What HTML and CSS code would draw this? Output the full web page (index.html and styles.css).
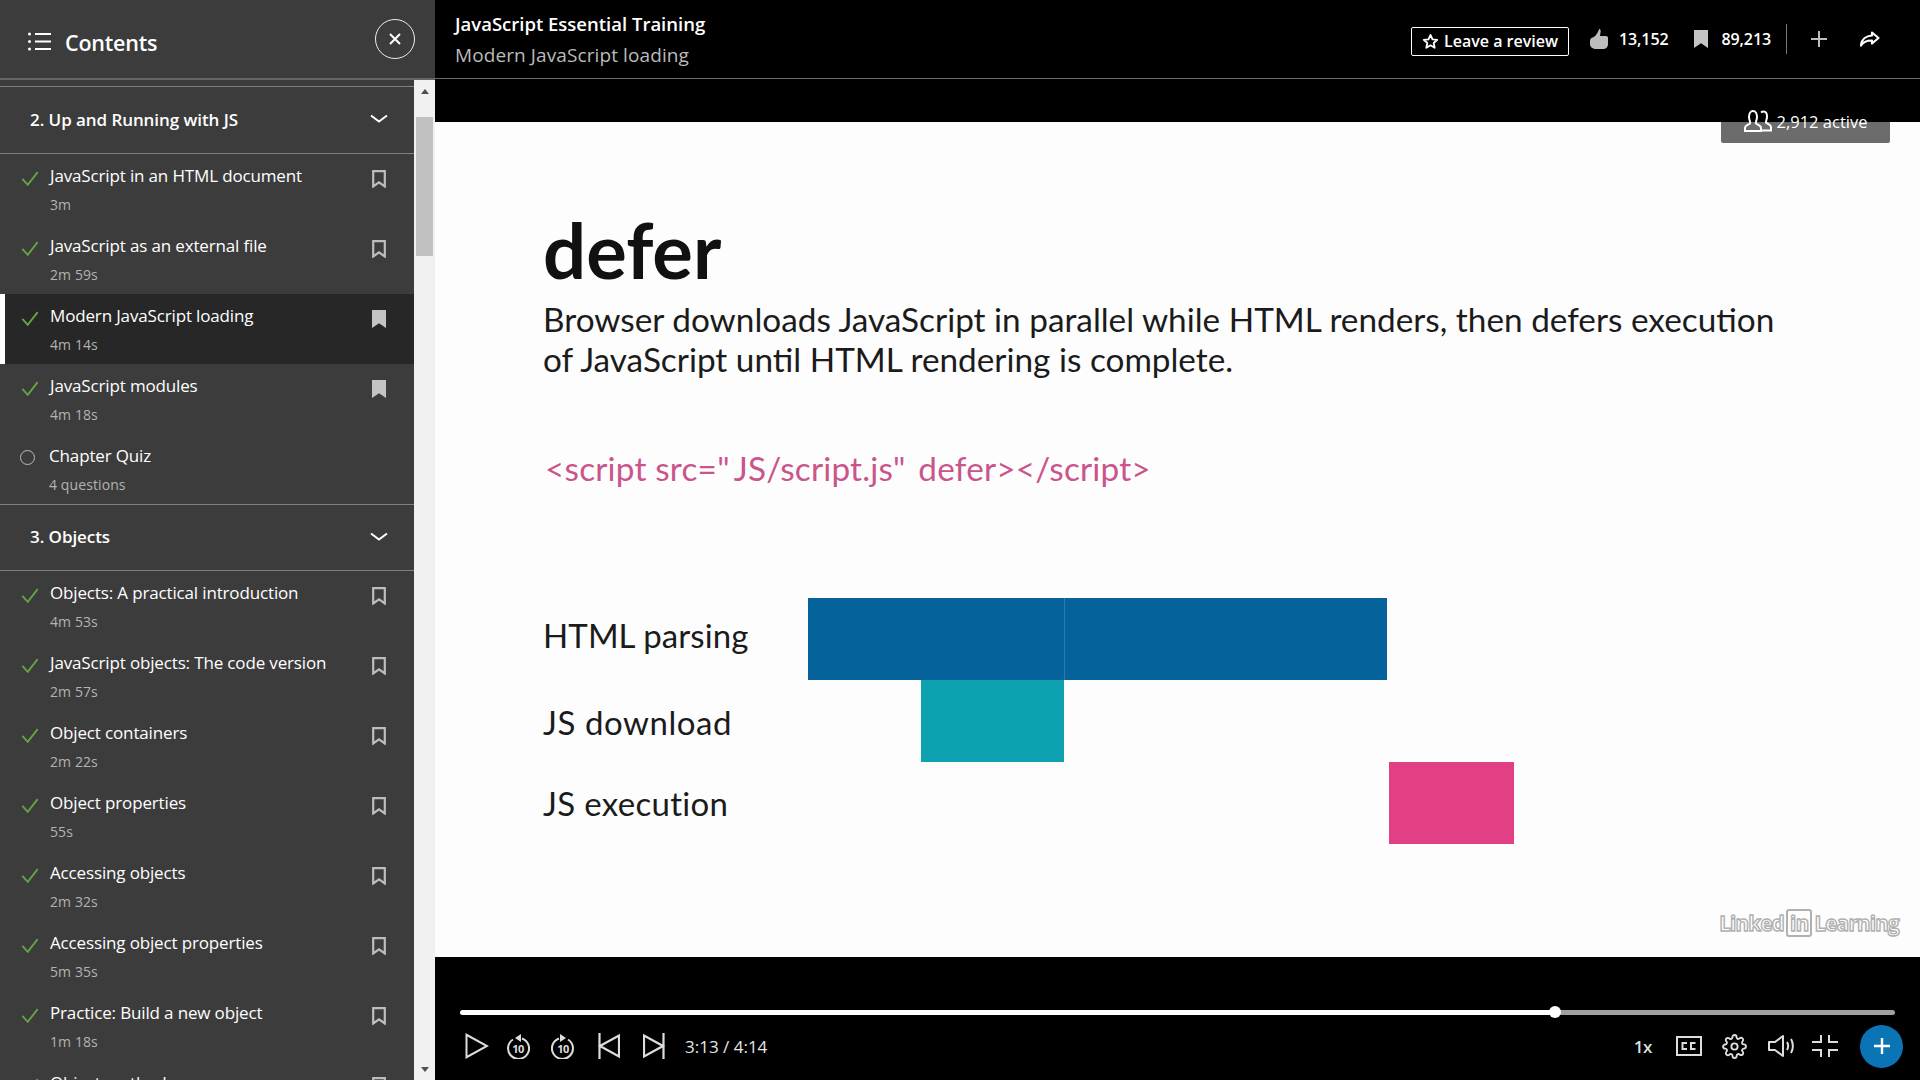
FILE: index.html
```html
<!DOCTYPE html>
<html lang="en">
<head>
<meta charset="utf-8">
<title>Modern JavaScript loading</title>
<link rel="stylesheet" href="styles.css">
</head>
<body>
<svg class="defs" width="0" height="0" aria-hidden="true">
  <symbol id="check" viewBox="0 0 20 16"><path d="M1.5 8.5 7.5 15 18.500 1" fill="none" stroke="#63a546" stroke-width="2.100"/></symbol>
  <symbol id="mark" viewBox="0 0 14 18"><path d="M1.2 1.2h11.6v15.3L7 12.4l-5.8 4.1z" fill="none" stroke="#bdbdbd" stroke-width="2.200"/></symbol>
  <symbol id="markfill" viewBox="0 0 14 18"><path d="M0 0h14v18l-7-4.8L0 18z" fill="#c4c4c4"/></symbol>
  <symbol id="chev" viewBox="0 0 18 10"><path d="M1 1.5 9 7.5l8-6" fill="none" stroke="#fff" stroke-width="2"/></symbol>
</svg>

<aside class="sidebar">
  <header class="side-head">
    <svg class="list-icon" width="23" height="19" viewBox="0 0 23 19"><g fill="#fff"><circle cx="1.5" cy="2" r="1.5"/><circle cx="1.5" cy="9.5" r="1.5"/><circle cx="1.5" cy="17" r="1.5"/><rect x="7" y="1" width="16" height="2"/><rect x="7" y="8.500" width="16" height="2"/><rect x="7" y="16" width="16" height="2"/></g></svg>
    <h2 class="side-title">Contents</h2>
    <button class="close-btn"><svg width="14" height="14" viewBox="0 0 14 14"><path d="M2 2l10 10M12 2 2 12" stroke="#fff" stroke-width="2"/></svg></button>
  </header>
  <div class="side-body">
    <div class="toc">
      <div class="sec"><span>2. Up and Running with JS</span><svg class="chev"><use href="#chev"/></svg></div>
      <div class="item"><svg class="check"><use href="#check"/></svg><div class="txt"><p class="t">JavaScript in an HTML document</p><p class="d">3m</p></div><svg class="mark"><use href="#mark"/></svg></div>
      <div class="item"><svg class="check"><use href="#check"/></svg><div class="txt"><p class="t">JavaScript as an external file</p><p class="d">2m 59s</p></div><svg class="mark"><use href="#mark"/></svg></div>
      <div class="item active"><svg class="check"><use href="#check"/></svg><div class="txt"><p class="t">Modern JavaScript loading</p><p class="d">4m 14s</p></div><svg class="mark"><use href="#markfill"/></svg></div>
      <div class="item"><svg class="check"><use href="#check"/></svg><div class="txt"><p class="t">JavaScript modules</p><p class="d">4m 18s</p></div><svg class="mark"><use href="#markfill"/></svg></div>
      <div class="item"><span class="ring"></span><div class="txt"><p class="t">Chapter Quiz</p><p class="d">4 questions</p></div></div>
      <div class="sec sec-next"><span>3. Objects</span><svg class="chev"><use href="#chev"/></svg></div>
      <div class="item"><svg class="check"><use href="#check"/></svg><div class="txt"><p class="t">Objects: A practical introduction</p><p class="d">4m 53s</p></div><svg class="mark"><use href="#mark"/></svg></div>
      <div class="item"><svg class="check"><use href="#check"/></svg><div class="txt"><p class="t">JavaScript objects: The code version</p><p class="d">2m 57s</p></div><svg class="mark"><use href="#mark"/></svg></div>
      <div class="item"><svg class="check"><use href="#check"/></svg><div class="txt"><p class="t">Object containers</p><p class="d">2m 22s</p></div><svg class="mark"><use href="#mark"/></svg></div>
      <div class="item"><svg class="check"><use href="#check"/></svg><div class="txt"><p class="t">Object properties</p><p class="d">55s</p></div><svg class="mark"><use href="#mark"/></svg></div>
      <div class="item"><svg class="check"><use href="#check"/></svg><div class="txt"><p class="t">Accessing objects</p><p class="d">2m 32s</p></div><svg class="mark"><use href="#mark"/></svg></div>
      <div class="item"><svg class="check"><use href="#check"/></svg><div class="txt"><p class="t">Accessing object properties</p><p class="d">5m 35s</p></div><svg class="mark"><use href="#mark"/></svg></div>
      <div class="item"><svg class="check"><use href="#check"/></svg><div class="txt"><p class="t">Practice: Build a new object</p><p class="d">1m 18s</p></div><svg class="mark"><use href="#mark"/></svg></div>
      <div class="item"><svg class="check"><use href="#check"/></svg><div class="txt"><p class="t">Object methods</p><p class="d">3m 21s</p></div><svg class="mark"><use href="#mark"/></svg></div>
    </div>
    <div class="scrollbar">
      <span class="arrow-up"></span>
      <span class="thumb"></span>
      <span class="arrow-down"></span>
    </div>
  </div>
</aside>

<main class="main">
  <header class="top">
    <div class="course">
      <h1 class="course-title">JavaScript Essential Training</h1>
      <p class="course-sub">Modern JavaScript loading</p>
    </div>
    <div class="top-actions">
      <button class="review"><svg width="17" height="17" viewBox="0 0 24 24"><path d="M12 2.800l2.800 6.200 6.700.7-5 4.500 1.400 6.600-5.900-3.400-5.900 3.400 1.400-6.600-5-4.500 6.700-.7z" fill="none" stroke="#fff" stroke-width="2.600" stroke-linejoin="round"/></svg>Leave a review</button>
      <svg class="thumb-up" width="18" height="20" viewBox="0 0 18 20"><path d="M9 0c1.500 0 2 1.500 1.500 3.500L10 7h6c1.500 0 2 1 2 2v6c0 3-2 5-5 5H6c-4 0-6-2.500-6-5v-3c0-2 1-3 2.500-3.500C5 8 8 4 9 0z" fill="#bdbdbd"/></svg>
      <span class="count">13,152</span>
      <svg class="top-mark" width="14" height="18"><use href="#markfill"/></svg>
      <span class="count">89,213</span>
      <span class="vr"></span>
      <svg class="top-plus" width="16" height="16" viewBox="0 0 16 16"><path d="M8 0v16M0 8h16" stroke="#bdbdbd" stroke-width="2"/></svg>
      <svg class="share" width="20" height="16" viewBox="0 0 20 16"><path d="M12 1.500 18.500 7 12 12.500V9.500C7 9.300 3.500 10.500 1 14.500 1.500 8.500 6 4.800 12 4.500z" fill="none" stroke="#fff" stroke-width="2.200" stroke-linejoin="round"/></svg>
    </div>
  </header>
  <div class="band"></div>
  <section class="slide">
    <div class="active-badge">
      <svg width="28" height="22" viewBox="0 0 28 22"><g fill="none" stroke="#fff" stroke-width="2"><path d="M1 21v-3c0-2.500 3-3 5-4.500 1-1-1-3-1-6.500 0-3 1.500-6 4-6s4 3 4 6c0 3.500-2 5.500-1 6.500 2 1.500 5 2 5 4.500v3z"/><path d="M17 2.500c.8-.6 1.500-.9 2.500-.9 2.500 0 3.500 2.500 3.500 5 0 3-1.500 5-1 6 1.500 1.400 5 1.800 5 4.400v3.500h-9"/></g></svg>
      <span>2,912 active</span>
    </div>
    <h2 class="s-title">defer</h2>
    <p class="s-body">Browser downloads JavaScript in parallel while HTML renders, then defers execution<br>of JavaScript until HTML rendering is complete.</p>
    <p class="s-code">&lt;script src=<span class="q">"</span>JS/script.js<span class="q">"</span> defer&gt;&lt;/script&gt;</p>
    <div class="chart">
      <div class="row"><span class="lab lab-up">HTML parsing</span><span class="bar blue"><i class="seam"></i></span></div>
      <div class="row"><span class="lab lab-down">JS download</span><span class="bar teal"></span></div>
      <div class="row"><span class="lab lab-exec">JS execution</span><span class="bar pink"></span></div>
    </div>
    <div class="brand"><span>Linked</span><span class="in">in</span><span>Learning</span></div>
  </section>
  <footer class="player">
    <div class="progress"><span class="played"></span><span class="knob"></span><span class="rest"></span></div>
    <div class="ctrls">
      <svg class="c-play" width="24" height="26" viewBox="0 0 24 26"><path d="M1.500 1.800v22.400L22 13z" fill="none" stroke="#ddd" stroke-width="2"/></svg>
      <span class="skip back"><svg width="24" height="26" viewBox="0 0 24 26"><path d="M7 6.500A10.500 10.500 0 1 0 16 5.500" fill="none" stroke="#ddd" stroke-width="2"/><path d="M15 1 9 5l6 4z" fill="#ddd"/></svg><b>10</b></span>
      <span class="skip fwd"><svg width="24" height="26" viewBox="0 0 24 26"><path d="M17 6.500A10.500 10.500 0 1 1 8 5.500" fill="none" stroke="#ddd" stroke-width="2"/><path d="M9 1l6 4-6 4z" fill="#ddd"/></svg><b>10</b></span>
      <svg class="c-prev" width="22" height="26" viewBox="0 0 22 26"><path d="M1.500 0v26M21 2.500v21L2 13z" fill="none" stroke="#ddd" stroke-width="2.200"/></svg>
      <svg class="c-next" width="22" height="26" viewBox="0 0 22 26"><path d="M20.500 0v26M1 2.500v21L20 13z" fill="none" stroke="#ddd" stroke-width="2.200"/></svg>
      <span class="time">3:13 / 4:14</span>
      <span class="rate">1x</span>
      <svg class="c-cc" width="26" height="20" viewBox="0 0 26 20"><rect x="1" y="1" width="24" height="18" fill="none" stroke="#ddd" stroke-width="2"/><path d="M11 7H6.500v6H11M19.500 7H15v6h4.500" fill="none" stroke="#ddd" stroke-width="2"/></svg>
      <svg class="c-gear" width="25" height="25" viewBox="0 0 24 24" fill="none" stroke="#ddd" stroke-width="1.800"><circle cx="12" cy="12" r="3"/><path d="M19.400 15a1.650 1.650 0 0 0 .33 1.820l.06.06a2 2 0 0 1 0 2.830 2 2 0 0 1-2.830 0l-.06-.06a1.650 1.650 0 0 0-1.820-.33 1.650 1.650 0 0 0-1 1.510V21a2 2 0 0 1-2 2 2 2 0 0 1-2-2v-.09A1.650 1.650 0 0 0 9 19.400a1.650 1.650 0 0 0-1.820.33l-.06.06a2 2 0 0 1-2.830 0 2 2 0 0 1 0-2.830l.06-.06a1.650 1.650 0 0 0 .33-1.820 1.650 1.650 0 0 0-1.510-1H3a2 2 0 0 1-2-2 2 2 0 0 1 2-2h.09A1.650 1.650 0 0 0 4.600 9a1.650 1.650 0 0 0-.33-1.820l-.06-.06a2 2 0 0 1 0-2.830 2 2 0 0 1 2.830 0l.06.06a1.650 1.650 0 0 0 1.820.33H9a1.650 1.650 0 0 0 1-1.510V3a2 2 0 0 1 2-2 2 2 0 0 1 2 2v.09a1.650 1.650 0 0 0 1 1.510 1.650 1.650 0 0 0 1.820-.33l.06-.06a2 2 0 0 1 2.830 0 2 2 0 0 1 0 2.830l-.06.06a1.650 1.650 0 0 0-.33 1.820V9a1.650 1.650 0 0 0 1.510 1H21a2 2 0 0 1 2 2 2 2 0 0 1-2 2h-.09a1.650 1.650 0 0 0-1.510 1z"/></svg>
      <svg class="c-vol" width="27" height="22" viewBox="0 0 27 22"><path d="M1 7v8h6l8 6V1L7 7z" fill="none" stroke="#ddd" stroke-width="2" stroke-linejoin="round"/><path d="M19 7c1.500 2.500 1.500 5.500 0 8M23 4c2.500 4 2.500 10 0 14" fill="none" stroke="#ddd" stroke-width="2"/></svg>
      <svg class="c-full" width="26" height="22" viewBox="0 0 26 22"><path d="M0 7h9V0M17 0v7h9M0 15h9v7M17 22v-7h9" fill="none" stroke="#ddd" stroke-width="2"/></svg>
      <button class="add"><svg width="16" height="16" viewBox="0 0 16 16"><path d="M8 0v16M0 8h16" stroke="#fff" stroke-width="2.400"/></svg></button>
    </div>
  </footer>
</main>
</body>
</html>
```
FILE: styles.css
```css
* { box-sizing: border-box; }
html, body { height: 100%; }
body {
  margin: 0;
  height: 1080px;
  display: flex;
  overflow: hidden;
  background: #000;
  color: #fff;
  font-family: "Open Sans", "Noto Sans", sans-serif;
}
p, h1, h2 { margin: 0; font-weight: normal; }
button { padding: 0; font: inherit; color: inherit; background: none; }
.defs { position: absolute; }

.sidebar { width: 435px; flex: none; display: flex; flex-direction: column; background: #3c3c3c; height: 1080px; }
.side-head { height: 80px; flex: none; display: flex; align-items: center; padding: 4px 20px 0 28px; border-bottom: 2px solid #666; }
.list-icon { margin-right: 14px; }
.side-title { font-size: 21.500px; font-weight: 600; letter-spacing: -0.2px; flex: 1; padding-top: 2px; }
.close-btn { width: 40px; height: 40px; border: 1.500px solid #eee; border-radius: 50%; display: flex; align-items: center; justify-content: center; margin-top: -4px; }
.side-body { flex: 1; min-height: 0; display: flex; }
.toc { flex: 1; min-width: 0; overflow: hidden; padding-top: 6px; }
.sec { height: 68px; display: flex; align-items: center; justify-content: space-between; padding: 0 26px 2px 30px; border-top: 1px solid #808080; border-bottom: 1px solid #808080; font-size: 17px; font-weight: 600; letter-spacing: -0.07px; }
.sec-next { height: 67px; }
.chev { width: 18px; height: 10px; }
.item { height: 70px; display: flex; align-items: flex-start; padding: 0 28px 0 21px; }
.item .check { width: 18px; height: 15px; margin-top: 17px; flex: none; }
.ring { width: 15px; height: 15px; border: 1.300px solid #bbb; border-radius: 50%; margin: 16px 3px 0 -1px; flex: none; }
.txt { flex: 1; padding-left: 11px; padding-top: 9px; }
.t { font-size: 17px; line-height: 26px; letter-spacing: -0.15px; }
.d { font-size: 14px; line-height: 20px; margin-top: 6px; color: #b3b3b3; letter-spacing: 0.1px; }
.mark { width: 14px; height: 18px; margin-top: 16px; flex: none; }
.active { background: #272727; box-shadow: inset 5px 0 0 #fff; }
.scrollbar { width: 21px; flex: none; background: #f1f1f1; display: flex; flex-direction: column; align-items: center; }
.arrow-up { margin-top: 9px; border: 4.500px solid transparent; border-top: 0; border-bottom: 5px solid #505050; }
.thumb { width: 17px; height: 139px; margin-top: 23px; background: #c1c1c1; }
.arrow-down { margin-top: auto; margin-bottom: 8px; border: 4.500px solid transparent; border-bottom: 0; border-top: 5px solid #505050; }

.main { flex: 1; min-width: 0; display: flex; flex-direction: column; }
.top { height: 79px; flex: none; display: flex; align-items: center; justify-content: space-between; padding: 0 40px 0 20px; border-bottom: 1px solid #6a6a6a; }
.course { padding-top: 1px; }
.course-title { font-size: 18.500px; font-weight: 600; line-height: 30px; }
.course-sub { font-size: 19px; line-height: 31px; margin-top: 1px; color: #bbb; letter-spacing: 0.1px; }
.top-actions { display: flex; align-items: center; margin-top: -1px; }
.review { width: 158px; height: 29px; border: 1px solid #fff; border-radius: 2px; display: flex; align-items: center; justify-content: center; gap: 5px; font-size: 16px; font-weight: 600; color: #fff; margin-right: 21px; margin-left: 1px; margin-top: 5px; }
.thumb-up { margin-right: 11px; }
.count { font-size: 16px; font-weight: 600; letter-spacing: -0.1px; }
.top-mark { margin: 0 14px 0 25px; }
.vr { width: 1px; height: 30px; background: #777; margin: 0 24px 0 15px; }
.share { margin-left: 33px; }
.band { height: 43px; flex: none; background: #000; }

.slide { flex: 1; min-height: 0; position: relative; background: #fdfdfd; color: #1b1b1b; font-family: Lato, "Open Sans", sans-serif; padding: 0 0 0 108px; }
.active-badge { position: absolute; right: 30px; top: -21px; width: 169px; height: 42px; padding-bottom: 2px; border-radius: 0 0 2px 2px; display: flex; align-items: center; justify-content: center; gap: 5px; color: #fff; font: 16.500px "Open Sans", sans-serif; background: linear-gradient(#000 21px, #6c6c6c 21px); }
.s-title { font-size: 76px; line-height: 80px; font-weight: 700; margin: 88px 0 0 0; color: #111; }
.s-body { font-size: 33.330px; line-height: 40px; margin-top: 9px; }
.s-code { font-size: 33.300px; line-height: 40px; margin-top: 69px; color: #c9558c; letter-spacing: 0.2px; padding-left: 2px; }
.q { margin-right: 4px; }
.chart { margin-top: 110px; display: grid; grid-auto-rows: 82px; }
.row { display: flex; align-items: center; position: relative; }
.lab { font-size: 33px; width: 265px; flex: none; letter-spacing: 0.1px; }
.lab-up { margin-bottom: 8px; }
.lab-down { margin-top: 1px; letter-spacing: 0.55px; }
.lab-exec { letter-spacing: 0.3px; }
.bar { display: block; height: 82px; position: relative; }
.blue { width: 579px; background: #05629a; }
.seam { position: absolute; left: 256px; top: 0; bottom: 0; width: 1px; background: #2a7cad; }
.teal { width: 143px; margin-left: 113px; background: #0ea1b0; }
.pink { width: 125px; margin-left: 581px; background: #e24085; }
.brand { position: absolute; right: 21px; bottom: 20px; display: flex; align-items: center; gap: 2px; font: 700 20.500px "Open Sans", sans-serif; color: #fff; -webkit-text-stroke: 1.400px #b0b0b0; letter-spacing: -0.7px; }
.in { border: 2px solid #b0b0b0; border-radius: 3px; padding: 0 2px; line-height: 24px; }

.player { height: 123px; flex: none; background: #000; padding: 52px 25px 0 25px; }
.progress { display: flex; align-items: center; height: 6px; }
.played { width: 1095px; height: 5px; background: #fff; border-radius: 3px 0 0 3px; }
.knob { width: 12px; height: 12px; border-radius: 50%; background: #fff; margin: 0 -6px; position: relative; }
.rest { flex: 1; height: 5px; background: #a0a0a0; border-radius: 0 3px 3px 0; }
.ctrls { display: flex; align-items: center; height: 44px; margin-top: 9px; margin-right: -8px; padding-left: 5px; }
.skip { position: relative; width: 24px; height: 26px; display: flex; align-items: center; justify-content: center; margin-left: 17px; }
.skip svg { position: absolute; left: 0; top: 0; }
.skip b { font: 700 11px/1 "Open Sans", sans-serif; color: #ddd; padding-top: 5px; letter-spacing: -0.5px; position: relative; }
.skip.fwd { margin-left: 21px; }
.c-prev { margin-left: 23px; }
.c-next { margin-left: 23px; }
.time { font-size: 17px; color: #e6e6e6; margin-left: 20px; flex: 1; }
.rate { font-size: 17px; font-weight: 600; color: #ddd; margin-right: 24px; letter-spacing: -0.4px; }
.c-gear { margin: 0 21px 0 20px; }
.c-full { margin: 0 22px 0 17px; }
.add { width: 43px; height: 43px; border: 0; border-radius: 50%; background: #0a74b5; display: flex; align-items: center; justify-content: center; }
```
